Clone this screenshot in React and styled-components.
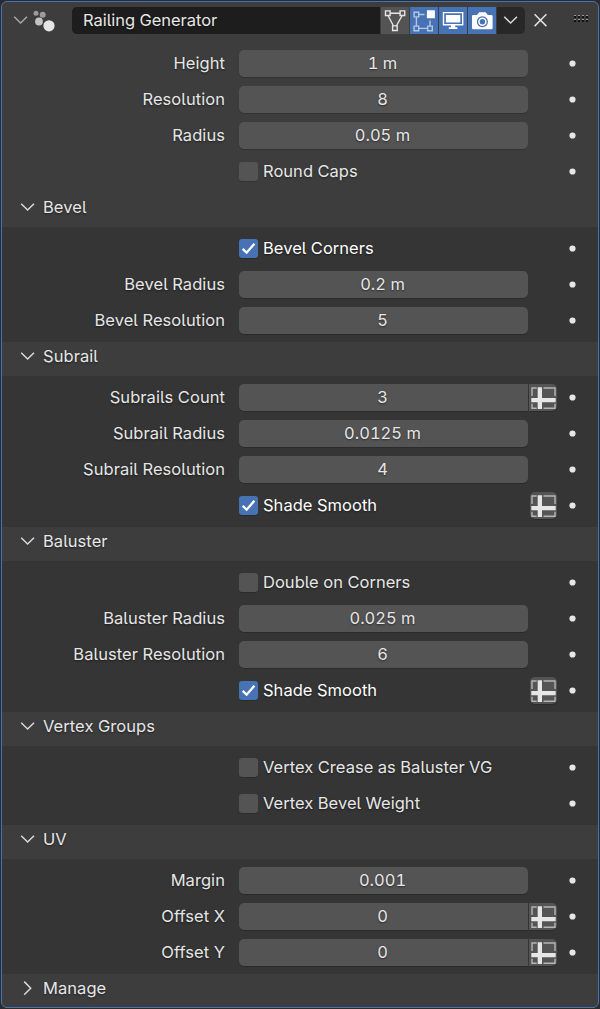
import React from "react";
import styled, { createGlobalStyle } from "styled-components";

const Global = createGlobalStyle`
  * { box-sizing: border-box; }
  html, body { margin: 0; background: #2b2b2b; }
  body {
    font-family: Inter, "Liberation Sans", sans-serif;
    font-size: 16.5px;
    font-feature-settings: "cv05" 1, "tnum" 1;
    color: #e6e6e6;
    line-height: 20px;
  }
`;

const Page = styled.main`
  width: 600px;
  height: 1009px;
  padding: 1px;
`;

const Panel = styled.section`
  height: 1007px;
  background: #3d3d3d;
  border: 1px solid #4772b3;
  border-radius: 6px;
  overflow: hidden;
  text-shadow: 0 1px 2px rgba(0, 0, 0, 0.5);
`;

const Header = styled.header`
  display: flex;
  align-items: center;
  height: 36px;
  padding: 0 8px 0 11px;
`;

const ModifierIcon = styled.svg`
  flex: none;
  margin-left: 2px;
`;

const NameField = styled.div`
  width: 308px;
  height: 27px;
  margin-left: 17px;
  padding: 3px 0 0 11px;
  background: #1d1d1d;
  border-radius: 5px 0 0 5px;
  letter-spacing: -0.03px;
`;

const Toggle = styled.div`
  width: 28px;
  height: 27px;
  margin-left: 1px;
  display: flex;
  align-items: center;
  justify-content: center;
  background: ${(p) => (p.$on ? "#4772b3" : "#545454")};
`;

const MenuButton = styled(Toggle)`
  background: #282828;
  border-radius: 0 5px 5px 0;
`;

const CloseIcon = styled.svg`
  margin-left: 8px;
`;

const Grip = styled.svg`
  margin-left: auto;
  margin-top: -2px;
`;

const Rows = styled.div`
  padding: ${(p) => (p.$top ? "7px 0 4px" : "3px 0 4px")};
  background: ${(p) => (p.$top ? "#3d3d3d" : "#353535")};
`;

const Row = styled.div`
  display: flex;
  align-items: center;
  height: 36px;
`;

const Label = styled.div`
  width: 223px;
  margin-right: 14px;
  text-align: right;
  white-space: nowrap;
  letter-spacing: 0.06px;
`;

const Value = styled.div`
  width: 289px;
  height: 27px;
  padding: 3px 2px 0 0;
  text-align: center;
  background: #545454;
  border-radius: ${(p) => (p.$joined ? "5px 0 0 5px" : "5px")};
  box-shadow: 0 1px 0 rgba(0, 0, 0, 0.18);
`;

const CheckArea = styled.div`
  width: 289px;
  display: flex;
  align-items: center;
  gap: 5px;
  white-space: nowrap;
  letter-spacing: 0.03px;
  color: ${(p) => (p.$on ? "#ffffff" : "#e6e6e6")};
`;

const Box = styled.span`
  width: 19px;
  height: 19px;
  flex: none;
  display: flex;
  border-radius: 3px;
  background: ${(p) => (p.$on ? "#4772b3" : "#545454")};
  box-shadow: 0 1px 0 rgba(0, 0, 0, 0.18);
`;

const AttributeSlot = styled.div`
  width: 29px;
  margin-right: 10px;
  display: flex;
`;

const AttributeButton = styled.div`
  width: ${(p) => (p.$joined ? "28px" : "27px")};
  height: 27px;
  margin-left: ${(p) => (p.$joined ? "1px" : "2px")};
  padding-left: ${(p) => (p.$joined ? "1px" : "0")};
  display: flex;
  background: #545454;
  border-radius: ${(p) => (p.$joined ? "0 5px 5px 0" : "5px")};
  box-shadow: 0 1px 0 rgba(0, 0, 0, 0.18);
`;

const Dot = styled.svg`
  flex: none;
  margin-left: 1px;
`;

const SectionHeader = styled.div`
  display: flex;
  height: 34px;
  padding: 4px 0 0 18px;
  gap: 7px;
  letter-spacing: 0.06px;
`;

const Chevron = ({ right, color = "#d9d9d9" }) => (
  <svg width="16" height="20" viewBox="0 0 16 20" fill="none" stroke={color} strokeWidth="1.5">
    <path d={right ? "M4.2 3.6 10.7 10.2 4.2 16.8" : "M1.2 6.8 7.6 13 14 6.8"} />
  </svg>
);

const NodesIcon = () => (
  <ModifierIcon width="24" height="24" viewBox="0 0 24 24">
    <circle cx="5" cy="5.3" r="2.5" fill="#9b9b9b" />
    <circle cx="11.7" cy="6.7" r="3" fill="#9b9b9b" />
    <circle cx="8" cy="13.5" r="3.9" fill="#c4c4c4" />
    <circle cx="18" cy="17.8" r="5.6" fill="#e6e6e6" />
  </ModifierIcon>
);

const MeshIcon = () => (
  <svg width="24" height="24" viewBox="0 0 24 24" fill="none" stroke="#e6e6e6" strokeWidth="1.4">
    <path d="M7 5.2H17.3M5.3 8 10.5 18M18.9 8 13.3 18" />
    <path d="M2.5 2.9h4.6v4.6H2.5zM17.1 2.9h4.6v4.6h-4.6zM9.6 17.9h4.6v4.6H9.6z" />
  </svg>
);

const EditIcon = () => (
  <svg width="24" height="24" viewBox="0 0 24 24" fill="none" stroke="#b5c7e1" strokeWidth="1.4">
    <path d="M7 6.5H12.5M4.4 9V18M7 20.4H15.5M18 12.5V18" />
    <path d="M2.1 4.3h4.6v4.6H2.1zM2.1 18.1h4.6v4.6H2.1zM15.7 18.1h4.6v4.6h-4.6z" />
    <path d="M14.9 2.2h8v8h-8z" fill="#fff" stroke="none" />
  </svg>
);

const DisplayIcon = () => (
  <svg width="24" height="24" viewBox="0 0 24 24">
    <path d="M2.5 4.6h19.2v12.2H2.5z" fill="none" stroke="#fff" strokeWidth="1.4" />
    <path d="M4.9 6.9h14.4v7.6H4.9zM10 17h4.2v2.3h2.2v1.6H7.8v-1.6H10z" fill="#fff" />
  </svg>
);

const CameraIcon = () => (
  <svg width="24" height="24" viewBox="0 0 24 24">
    <path
      fillRule="evenodd"
      d="M3.2 7H7L9.2 4.2H15.6L17.8 7H21.4Q22.6 7 22.6 8.2V20Q22.6 21.3 21.4 21.3H3.2Q2 21.3 2 20V8.2Q2 7 3.2 7ZM12.4 8.3a5.5 5.5 0 1 0 .01 0Z"
      fill="#fff"
    />
    <circle cx="12.4" cy="13.8" r="3.5" fill="none" stroke="#fff" strokeWidth="1.5" />
  </svg>
);

const SpreadsheetIcon = () => (
  <svg width="27" height="27" viewBox="0 0 27 27">
    <path
      d="M2 12V4H6.7M13.5 4H25V12M2 19.7V24.3H6.7M13.5 24.3H25V19.7"
      fill="none"
      stroke="#b5b5b5"
      strokeWidth="1.4"
    />
    <path d="M7.7 3.3H12V14H25.7V18.2H12V25H7.7V18.2H1.3V14H7.7Z" fill="#e6e6e6" />
  </svg>
);

const Check = () => (
  <svg width="19" height="19" viewBox="0 0 19 19" fill="none" stroke="#fff" strokeWidth="2.3">
    <path d="M3.7 9.9 7.6 13.7 15.4 4.8" />
  </svg>
);

const AnimateDot = () => (
  <Dot width="8" height="8" viewBox="0 0 8 8">
    <circle cx="4.5" cy="4.5" r="3.1" fill="#e6e6e6" />
  </Dot>
);

const Attribute = ({ joined }) => (
  <AttributeButton $joined={joined}>
    <SpreadsheetIcon />
  </AttributeButton>
);

const Field = ({ label, value, attr }) => (
  <Row>
    <Label>{label}</Label>
    <Value $joined={attr}>{value}</Value>
    <AttributeSlot>{attr && <Attribute joined />}</AttributeSlot>
    <AnimateDot />
  </Row>
);

const Checkbox = ({ label, on, attr }) => (
  <Row>
    <Label />
    <CheckArea $on={on}>
      <Box $on={on}>{on && <Check />}</Box>
      {label}
    </CheckArea>
    <AttributeSlot>{attr && <Attribute />}</AttributeSlot>
    <AnimateDot />
  </Row>
);

const Section = ({ title, children }) => (
  <>
    <SectionHeader>
      <Chevron right={!children} />
      {title}
    </SectionHeader>
    {children && <Rows>{children}</Rows>}
  </>
);

export default function App() {
  return (
    <Page>
      <Global />
      <Panel>
        <Header>
          <Chevron color="#a8a8a8" />
          <NodesIcon />
          <NameField>Railing Generator</NameField>
          <Toggle><MeshIcon /></Toggle>
          <Toggle $on><EditIcon /></Toggle>
          <Toggle $on><DisplayIcon /></Toggle>
          <Toggle $on><CameraIcon /></Toggle>
          <MenuButton><Chevron /></MenuButton>
          <CloseIcon width="15" height="14" viewBox="0 0 15 14" stroke="#e0e0e0" strokeWidth="1.5">
            <path d="M1.6 1.3 13.4 13.1M13.4 1.3 1.6 13.1" />
          </CloseIcon>
          <Grip width="16" height="8" viewBox="0 0 16 8">
            {[0, 4, 8, 12].map((x) =>
              [0, 4].map((y) => (
                <g key={`${x}-${y}`}>
                  <rect x={x} y={y} width="2" height="1" fill="#989898" />
                  <rect x={x} y={y + 1} width="2" height="2" fill="#111" />
                </g>
              ))
            )}
          </Grip>
        </Header>
        <Rows $top>
          <Field label="Height" value="1 m" />
          <Field label="Resolution" value="8" />
          <Field label="Radius" value="0.05 m" />
          <Checkbox label="Round Caps" />
        </Rows>
        <Section title="Bevel">
          <Checkbox label="Bevel Corners" on />
          <Field label="Bevel Radius" value="0.2 m" />
          <Field label="Bevel Resolution" value="5" />
        </Section>
        <Section title="Subrail">
          <Field label="Subrails Count" value="3" attr />
          <Field label="Subrail Radius" value="0.0125 m" />
          <Field label="Subrail Resolution" value="4" />
          <Checkbox label="Shade Smooth" on attr />
        </Section>
        <Section title="Baluster">
          <Checkbox label="Double on Corners" />
          <Field label="Baluster Radius" value="0.025 m" />
          <Field label="Baluster Resolution" value="6" />
          <Checkbox label="Shade Smooth" on attr />
        </Section>
        <Section title="Vertex Groups">
          <Checkbox label="Vertex Crease as Baluster VG" />
          <Checkbox label="Vertex Bevel Weight" />
        </Section>
        <Section title="UV">
          <Field label="Margin" value="0.001" />
          <Field label="Offset X" value="0" attr />
          <Field label="Offset Y" value="0" attr />
        </Section>
        <Section title="Manage" />
      </Panel>
    </Page>
  );
}
